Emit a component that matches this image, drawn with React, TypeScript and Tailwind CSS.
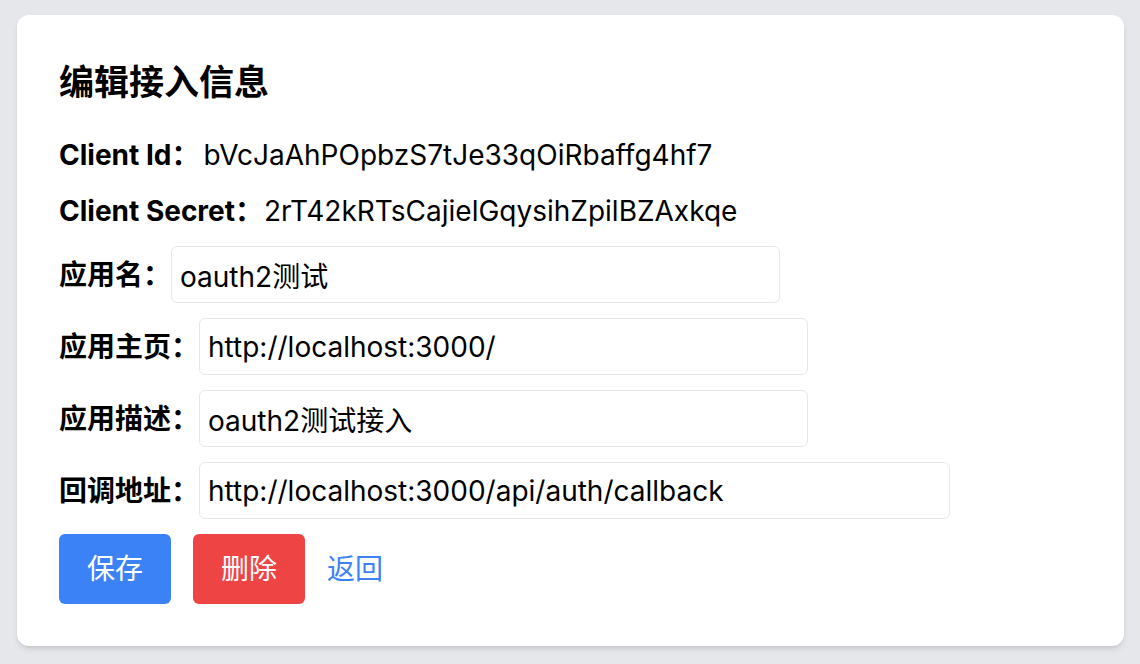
import React from 'react'

const font = { fontFamily: 'Inter, "Noto Sans CJK SC", sans-serif' }

const fields = [
  { label: '应用名：', value: 'oauth2测试', width: 'w-[609px]' },
  { label: '应用主页：', value: 'http://localhost:3000/', width: 'w-[609px]' },
  { label: '应用描述：', value: 'oauth2测试接入', width: 'w-[609px]' },
  { label: '回调地址：', value: 'http://localhost:3000/api/auth/callback', width: 'w-[751px]' },
]

export default function App() {
  return (
    <div className="min-h-screen bg-[#e5e7eb] pt-[15px] pl-[17px] pr-[16px] text-black" style={font}>
      <div className="flex flex-col gap-[15px] rounded-xl bg-white px-[42px] pt-[42px] pb-[42px] shadow-md">
        <h1 className="mb-[12px] text-[35px] leading-[50px] font-bold">编辑接入信息</h1>
        <div className="flex h-[41px] items-center text-[28px]">
          <span className="font-bold">Client Id：</span>
          <span className="ml-[4px]">bVcJaAhPOpbzS7tJe33qOiRbaffg4hf7</span>
        </div>
        <div className="flex h-[41px] items-center text-[28px]">
          <span className="font-bold">Client Secret：</span>
          <span className="ml-[1px]">2rT42kRTsCajielGqysihZpilBZAxkqe</span>
        </div>
        {fields.map((f) => (
          <div key={f.label} className="flex items-center text-[28px]">
            <label className="font-bold">{f.label}</label>
            <input
              readOnly
              value={f.value}
              className={`${f.width} h-[57px] rounded-md border border-[#e5e7eb] px-[8px] outline-none`}
            />
          </div>
        ))}
        <div className="flex items-center gap-[22px] text-[28px]">
          <button className="h-[70px] w-[112px] rounded-md bg-[#3b82f6] text-white">保存</button>
          <button className="h-[70px] w-[112px] rounded-md bg-[#ef4444] text-white">删除</button>
          <a className="text-[#3b82f6]" href="#">
            返回
          </a>
        </div>
      </div>
    </div>
  )
}
